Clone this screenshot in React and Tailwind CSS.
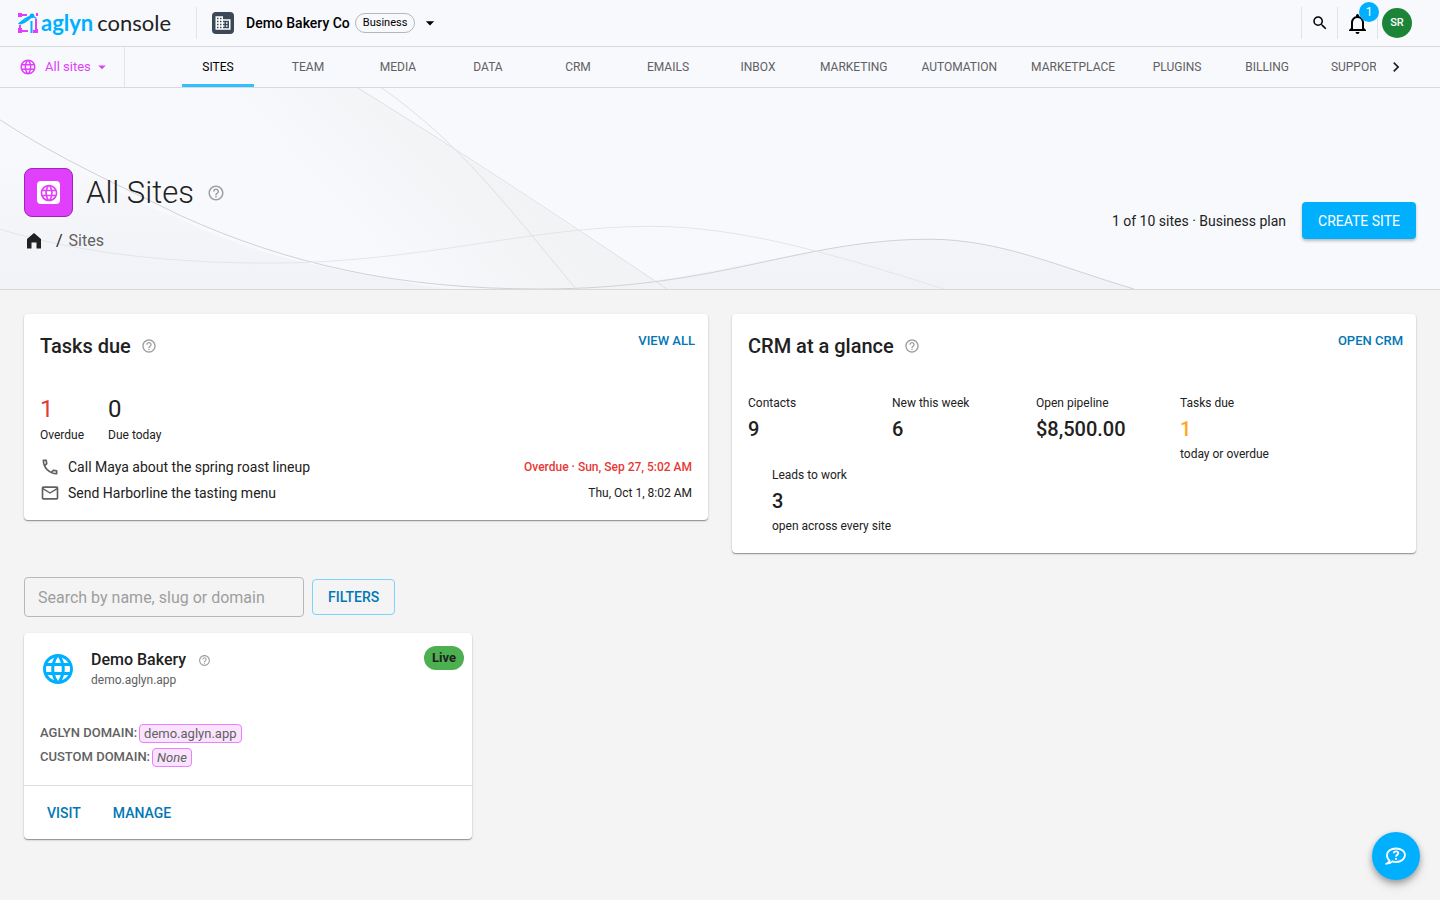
import {
  MdArrowDropDown,
  MdBusiness,
  MdChevronRight,
  MdHelpOutline,
  MdLanguage,
  MdMailOutline,
  MdOutlinePhone,
  MdSearch,
} from "react-icons/md";

const tabs = ["Sites", "Team", "Media", "Data", "CRM", "Emails", "Inbox", "Marketing", "Automation", "Marketplace", "Plugins", "Billing", "Support"];

const stats = [
  { label: "Contacts", value: "9" },
  { label: "New this week", value: "6" },
  { label: "Open pipeline", value: "$8,500.00" },
  { label: "Tasks due", value: "1", note: "today or overdue", color: "text-[#ffa726]" },
];

const cardShadow = "bg-white rounded shadow-[0_1px_1px_rgba(0,0,0,0.35),0_1px_3px_rgba(0,0,0,0.12)]";

function Logo() {
  return (
    <svg width="21" height="21" viewBox="0 0 21 21" aria-hidden="true">
      <g fill="#e040fb">
        <path d="M0 0H4V1H9V3H4V4H0Z" />
        <path d="M0 20V15H1V12H3V15H4V17H10V19H4V20Z" />
        <path d="M17 6H19V16H20V20H15V17H17Z" />
        <rect x="18" y="0" width="2" height="3" />
      </g>
      <g fill="none" stroke="#00b0ff">
        <path d="M0.500 11L7 6L13 3" strokeWidth="1.500" />
        <path d="M2 10.500L7 8.500L14 3" strokeWidth="2.500" />
        <path d="M14 2.500L18.500 5.500" strokeWidth="1.500" />
        <path d="M13.500 8V20" strokeWidth="2" />
      </g>
      <circle cx="14" cy="2.800" r="2.400" fill="#00b0ff" />
    </svg>
  );
}

function HeroWaves() {
  return (
    <svg className="absolute inset-0 w-full h-full" viewBox="0 0 1440 202" preserveAspectRatio="none" aria-hidden="true">
      <defs>
        <linearGradient id="base" x1="0" y1="0" x2="0" y2="1">
          <stop offset="0.2" stopColor="#f8f9fc" />
          <stop offset="1" stopColor="#f1f2f7" />
        </linearGradient>
        <linearGradient id="sheet" gradientUnits="userSpaceOnUse" x1="460" y1="50" x2="350" y2="150">
          <stop offset="0" stopColor="#f2f3f5" />
          <stop offset="1" stopColor="#f8f9fc" />
        </linearGradient>
      </defs>
      <path d="M0 32C60 76 130 114 180 131C260 174 400 202 540 202C700 202 800 152 930 152C1000 152 1060 180 1134 202H0Z" fill="url(#base)" />
      <path d="M150 0H358C470 72 560 132 667 202H450C330 188 240 140 150 0Z" fill="url(#sheet)" />
      <g fill="none">
        <path d="M0 32C60 72 120 98 180 128C290 178 400 202 540 202C720 202 800 152 930 152C1000 152 1060 180 1134 202" stroke="#d0d1d5" />
        <path d="M0 142C80 166 170 176 270 176C420 176 530 139 650 139C740 139 830 166 944 202" stroke="#e4e5e8" />
        <path d="M358 0C470 70 560 130 667 202M382 0C460 56 500 110 576 202" stroke="#dedfe2" />
      </g>
    </svg>
  );
}

function Help({ className = "text-base" }) {
  return (
    <button aria-label="Help" className="text-[#9e9e9e]">
      <MdHelpOutline className={className} />
    </button>
  );
}

function Stat({ label, value, note, color = "" }) {
  return (
    <div>
      <p className="text-xs leading-5">{label}</p>
      <p className={`text-xl font-medium leading-8 ${color}`}>{value}</p>
      {note && <p className="text-xs leading-[18px] whitespace-nowrap">{note}</p>}
    </div>
  );
}

export default function App() {
  return (
    <div className="min-h-screen bg-[#f4f4f4] text-[#212121] font-['Roboto',sans-serif]">
      {/* Top bar */}
      <header className="flex items-center h-[47px] bg-[#f8f9fc] border-b border-[#d8d9dd] pl-[18px] pr-7 text-black">
        <a href="#" className="flex items-center gap-[2px] w-[178px]">
          <Logo />
          <span className="flex gap-1 font-['Lato',sans-serif] text-[22px] leading-6 text-[#222]">
            <b className="text-[#00b0ff]">aglyn</b>
            <span>console</span>
          </span>
        </a>
        <button className="flex items-center h-8 border-l border-[#e2e3e6] pl-[15px]">
          <span className="bg-[#3c4858] rounded p-[2px] text-white"><MdBusiness className="text-lg" /></span>
          <span className="text-sm font-medium ml-3">Demo Bakery Co</span>
          <span className="ml-[5px] border border-[#b5b6b9] rounded-full px-[7px] h-5 flex items-center text-[11px]">Business</span>
          <MdArrowDropDown className="text-xl ml-[5px]" />
        </button>
        <div className="ml-auto flex items-center">
          <button aria-label="Search" className="h-8 w-9 flex items-center justify-center border-l border-[#e2e3e6]">
            <MdSearch className="text-lg" />
          </button>
          <button aria-label="Notifications" className="relative h-8 w-[41px] flex items-center justify-center border-x border-[#e2e3e6] pt-[2px]">
            <svg width="24" height="24" viewBox="0 0 24 24" fill="currentColor">
              <path d="M16 17H7V10.500C7 8 9 6 11.500 6S16 8 16 10.500M18 16V10.500C18 7.430 15.860 4.860 13 4.180V3.500A1.500 1.500 0 0 0 11.500 2A1.500 1.500 0 0 0 10 3.500V4.180C7.130 4.860 5 7.430 5 10.500V16L3 18V19H20V18M11.500 22A2 2 0 0 0 13.500 20H9.500A2 2 0 0 0 11.500 22Z" />
            </svg>
            <span className="absolute -top-[5px] left-[21px] w-5 h-5 rounded-full bg-[#00b0ff] text-white text-xs leading-5">1</span>
          </button>
          <button className="ml-1 w-[30px] h-[30px] rounded-full bg-[#1b8437] text-white text-[11px] font-medium">SR</button>
        </div>
      </header>

      {/* Section tabs */}
      <nav className="flex h-[41px] bg-[#f8f9fc] border-b border-[#d8d9dd]">
        <button className="flex items-center w-[125px] shrink-0 pl-[19px] border-r border-[#e2e3e6] text-[13px] text-[#e040fb]">
          <MdLanguage className="text-lg" />
          <span className="ml-2">All sites</span>
          <MdArrowDropDown className="text-lg ml-[2px]" />
        </button>
        <div className="ml-12 flex flex-1 min-w-0 overflow-hidden">
          {tabs.map((tab, i) => (
            <a
              key={tab}
              href="#"
              className={`min-w-[90px] px-[17px] shrink-0 flex justify-center text-xs leading-[40px] uppercase ${i === 0 ? "text-black" : "text-[#5f6063]"}`}
            >
              {i === 0 ? <span className="w-[72px] -mx-2 shrink-0 text-center border-b-[3px] border-[#33bfff] rounded-t-sm h-10">{tab}</span> : tab}
            </a>
          ))}
        </div>
        <button aria-label="More tabs" className="w-16 shrink-0 pl-[10px]">
          <MdChevronRight className="text-xl" />
        </button>
      </nav>

      {/* Page heading */}
      <section className="relative h-[202px] bg-[#f8f9fc] border-b border-[#d8d9dd]">
        <HeroWaves />
        <div className="relative flex justify-between px-6 pt-20">
          <div>
            <div className="flex items-center">
              <span className="w-[49px] h-[49px] rounded-lg bg-[#e040fb] border border-[#9c27b0] flex items-center justify-center">
                <span className="w-[23px] h-[23px] rounded-sm bg-white text-[#e040fb] flex items-center justify-center"><MdLanguage className="text-xl" /></span>
              </span>
              <h1 className="ml-[13px] mr-[13px] text-[31px] leading-[49px] font-light">All Sites</h1>
              <Help className="text-lg" />
            </div>
            <div className="flex items-center mt-3 leading-6">
              <a href="#" aria-label="Home">
                <svg width="20" height="20" viewBox="0 0 20 20" fill="currentColor"><path d="M10 2L17 8V17.500H12.500V11.500H7.500V17.500H3V8Z" /></svg>
              </a>
              <span className="ml-3 mr-[6px]">/</span>
              <span className="text-[#616161]">Sites</span>
            </div>
          </div>
          <div className="flex items-center gap-4 h-[37px] mt-[34px] text-sm">
            <span>1 of 10 sites · Business plan</span>
            <button className="h-[37px] px-4 rounded bg-[#00b0ff] text-white uppercase shadow-[0_2px_3px_rgba(0,0,0,0.25)]">Create site</button>
          </div>
        </div>
      </section>

      <main className="p-6">
        <div className="grid grid-cols-2 gap-6 items-start">
          {/* Tasks */}
          <section className={`${cardShadow} px-4 pt-4 pb-[14px]`}>
            <div className="flex items-center h-8">
              <h2 className="text-xl font-medium mr-[10px]">Tasks due</h2>
              <Help />
              <a href="#" className="ml-auto mr-[-3px] mb-[10px] text-[13px] font-medium text-[#0277b5] uppercase">View all</a>
            </div>
            <div className="flex gap-6 mt-[31px]">
              <div><p className="text-2xl leading-8 text-[#e53935]">1</p><p className="text-xs leading-5">Overdue</p></div>
              <div><p className="text-2xl leading-8">0</p><p className="text-xs leading-5">Due today</p></div>
            </div>
            <ul className="mt-[9px] text-sm">
              <li className="flex items-center h-[26px]">
                <MdOutlinePhone className="text-xl mr-2 text-[#616161]" />
                Call Maya about the spring roast lineup
                <span className="ml-auto text-xs font-medium text-[#e53935]">Overdue · Sun, Sep 27, 5:02 AM</span>
              </li>
              <li className="flex items-center h-[26px]">
                <MdMailOutline className="text-xl mr-2 text-[#616161]" />
                Send Harborline the tasting menu
                <span className="ml-auto text-xs">Thu, Oct 1, 8:02 AM</span>
              </li>
            </ul>
          </section>

          {/* CRM summary */}
          <section className={`${cardShadow} px-4 pt-4 pb-[18px]`}>
            <div className="flex items-center h-8">
              <h2 className="text-xl font-medium mr-[10px]">CRM at a glance</h2>
              <Help />
              <a href="#" className="ml-auto mr-[-3px] mb-[10px] text-[13px] font-medium text-[#0277b5] uppercase">Open CRM</a>
            </div>
            <div className="flex gap-6 mt-[31px]">
              {stats.map((s) => (
                <div key={s.label} className="w-[120px]"><Stat {...s} /></div>
              ))}
            </div>
            <div className="pl-6 mt-[2px]">
              <Stat label="Leads to work" value="3" note="open across every site" />
            </div>
          </section>
        </div>

        {/* Search */}
        <div className="flex items-center gap-2 mt-6">
          <input
            type="search"
            aria-label="Search sites"
            placeholder="Search by name, slug or domain"
            className="w-[280px] h-10 px-[13px] rounded border border-[#b8b8b8] placeholder-[#9e9e9e]"
          />
          <button className="h-9 px-[15px] rounded border border-[#7bd3fb] text-sm font-medium text-[#0277b5] uppercase">Filters</button>
        </div>

        {/* Site card */}
        <article className={`${cardShadow} w-[448px] mt-4`}>
          <div className="flex h-[88px] pt-4 pl-4 pr-2">
            <MdLanguage className="text-4xl text-[#00b0ff] mt-[2px]" />
            <div className="ml-[15px]">
              <div className="flex items-center"><h3 className="font-medium leading-[22px] mr-3">Demo Bakery</h3><Help className="text-[13px]" /></div>
              <p className="text-xs leading-[18px] text-[#616161]">demo.aglyn.app</p>
            </div>
            <span className="ml-auto -mt-[3px] h-6 px-2 rounded-full bg-[#4caf50] text-[13px] leading-6 font-bold">Live</span>
          </div>
          <dl className="px-4 pb-4 text-[13px] text-[#616161]">
            <div className="flex items-center h-6">
              <dt className="font-medium uppercase mr-[2px]">Aglyn domain:</dt>
              <dd className="rounded-sm border border-[#ea80fc] bg-[#fae3fe] px-1 leading-[17px]">demo.aglyn.app</dd>
            </div>
            <div className="flex items-center h-6">
              <dt className="font-medium uppercase mr-[2px]">Custom domain:</dt>
              <dd className="rounded-sm border border-[#ea80fc] bg-[#fae3fe] px-1 leading-[17px] italic">None</dd>
            </div>
          </dl>
          <div className="flex gap-8 h-[54px] items-center border-t border-[#dcdcdc] px-[23px] text-sm font-medium text-[#0277b5] uppercase">
            <a href="#">Visit</a>
            <a href="#">Manage</a>
          </div>
        </article>
      </main>

      {/* Help chat */}
      <button aria-label="Open help chat" className="fixed right-5 bottom-5 w-12 h-12 rounded-full bg-[#00b0ff] text-white flex items-center justify-center shadow-[0_3px_6px_rgba(0,0,0,0.3),0_6px_12px_rgba(0,0,0,0.12)]">
        <svg width="22" height="20" viewBox="0 0 22 20" fill="none" stroke="currentColor" strokeWidth="1.800">
          <path d="M4.500 14.500C2.500 13 2 11 2 9C2 5 6 2.500 11 2.500S20 5 20 9S16 16 11 16C9.500 16 8.500 15.700 7.500 15.400C6 17 4 17.500 2 17.500C3.500 16.500 4.500 15.500 4.500 14.500Z" />
          <path d="M8.800 7.300C8.800 4.800 13.300 4.800 13.300 7.300C13.300 8.800 11 8.800 11 10.800M11 12v1.700" />
        </svg>
      </button>
    </div>
  );
}
